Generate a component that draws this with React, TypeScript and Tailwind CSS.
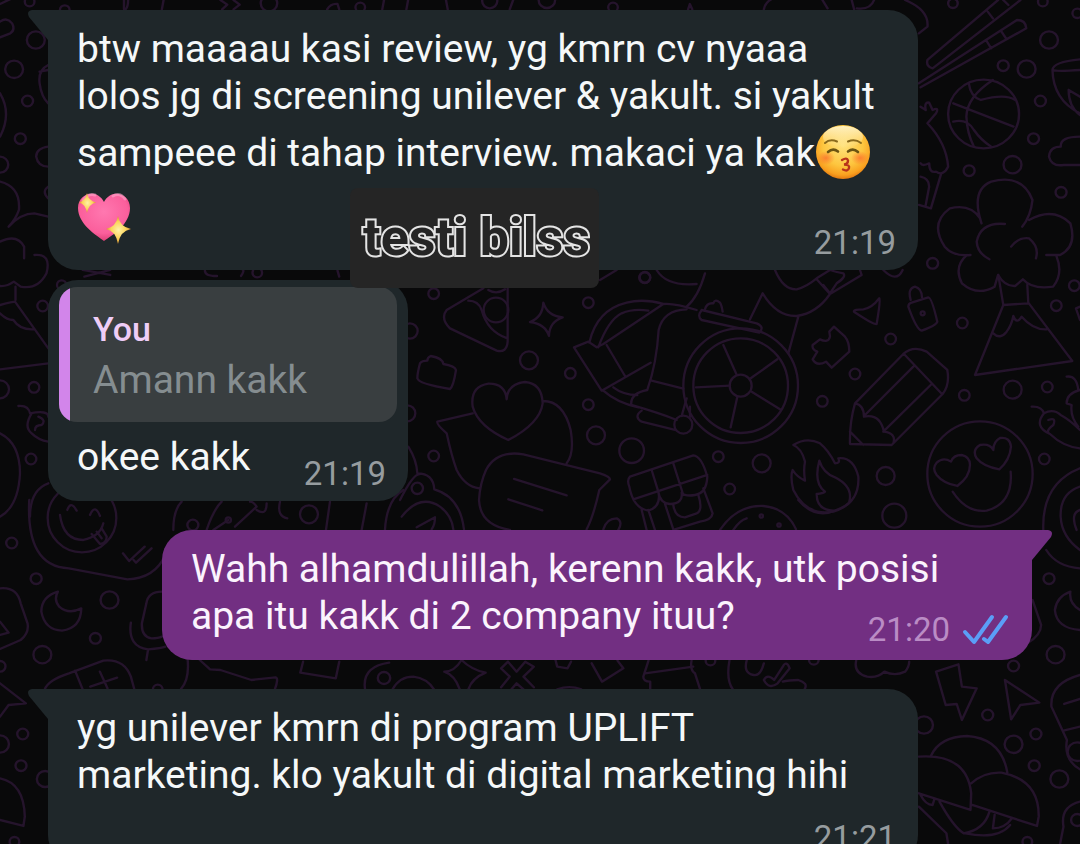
import type { ReactNode } from 'react';
import clsx from 'clsx';

type BubbleProps = {
  children: ReactNode;
  time: string;
  sent?: boolean;
  tail?: boolean;
  className?: string;
};

// Each patch of wallpaper is drawn at about three times its size and scaled down
type Patch = {
  transform: string;
  path: string;
  dots: number[][];
};

const patches: Patch[] = [
  {
    transform: 'scale(.3444 .3333)',
    path: 'M0 65Q20 50 35 70Q45 90 30 100L0 112M0 12L45-10M0 280Q35 340 0 410M0 545Q60 560 55 630Q45 660 25 680Q60 640 100 640L140 650M0 725Q50 700 70 740V775M100 765Q150 760 135 820Q110 870 60 860L40 845Q20 860 0 858M45 860V900M140 195Q110 210 115 250Q120 290 140 310M140 210L115 215M140 440Q105 445 105 470Q110 500 140 500M140 560Q120 575 140 595M360 0V28M372 0Q372 20 365 28M475 0L470 28M640 0L660 14L645 28M678 0L696 14L678 28M950 28Q960 10 980 12L985 28M1115 0L1110 28M1180 28L1185 0M1295 0L1300 28M1480 28L1490 0M240 810L320 825M245 830L320 810M595 812Q595 828 630 828M700 828Q710 812 705 810M980 812L985 830',
    dots: [[86, 5, 14], [104, 120, 26], [41, 208, 26], [80, 303, 16], [59, 416, 16], [0, 494, 24], [781, 10, 24], [1046, 22, 14], [1422, 3, 22], [188, 30, 14], [747, 818, 14]],
  },
  {
    transform: 'translate(540 0) scale(.3444 .3333)',
    path: 'M1330 0L1125 180Q1120 200 1140 205L1395 0M1300 35L1315 55M1345 0L1360 15M1100 250L1385 60Q1410 60 1412 85L1105 262M1340 95L1355 118M1295 120L1310 145M1200 310L1375 380M1245 250Q1250 290 1280 300Q1350 280 1380 300M1315 240Q1240 290 1238 350Q1240 400 1260 440M1200 365Q1240 355 1260 390Q1280 420 1310 440M1568 178Q1490 185 1488 210Q1500 215 1568 210M1488 210Q1490 300 1568 340M1535 270Q1535 320 1568 345M1535 270L1568 290M1568 410Q1510 410 1512 440Q1480 440 1478 470Q1485 500 1520 495L1568 495M1282 670Q1250 570 1310 545Q1400 520 1430 600Q1425 650 1400 680M1278 655Q1250 610 1190 625Q1130 670 1175 740Q1200 770 1250 765M1420 660Q1490 620 1540 670Q1560 740 1510 765L1470 765M1240 765Q1200 800 1225 850Q1270 890 1320 860L1330 825Q1350 860 1380 858L1402 838Q1430 870 1490 860Q1520 820 1500 770M1350 672Q1280 665 1268 725Q1270 760 1305 778M1368 740Q1390 710 1420 715Q1450 740 1440 775M1105 320L1120 330Q1115 305 1130 308L1140 330Q1160 320 1150 340L1125 370Q1180 430 1185 500Q1170 530 1150 515Q1130 520 1130 490Q1110 500 1105 490M1165 520L1135 625L1100 615M1105 530Q1130 535 1130 560L1120 615M650 28Q655 0 690-10M820 0L835 25M905 0L912 28M970 0Q960 30 920 25M1060 0Q1130 30 1125 80L1100 100M430 28L435 12L442 28',
    dots: [[1199, 10, 14], [1460, 5, 14], [1478, 120, 26], [1345, 197, 16], [1413, 207, 26], [1288, 342, 103], [1453, 303, 16], [1433, 416, 16], [1372, 494, 26], [1246, 512, 16], [1513, 577, 16], [1140, 790, 16], [304, 833, 16], [1560, 40, 14], [212, 22, 14], [20, 0, 24]],
  },
  {
    transform: 'translate(0 270) scale(.3333)',
    path: 'M0 105Q40 95 45 95L145 235M0 298L145 280M0 130Q20 150 40 150Q60 180 100 178M55 408Q85 405 90 430Q145 420 145 440M95 430Q70 470 95 490Q115 510 145 515M115 440Q140 450 125 465Q105 465 105 480M0 490Q60 520 60 610Q55 710 0 740M180 735Q190 810 250 810Q300 800 310 760M202 720Q212 690 230 722M270 735Q285 700 300 738M275 792L300 822Q320 820 320 800L305 775M290 785L305 805M145 640Q90 660 90 740M520 780Q520 720 545 695M620 780Q640 720 665 695M640 780L685 750M705 770L770 710Q760 695 750 695M770 720Q800 740 800 700M840 695Q830 740 862 745M990 695L978 780M1100 700L1085 780M1155 780Q1160 690 1210 660',
    dots: [[128, 108, 16], [185, 45, 14], [102, 352, 16], [0, 358, 27], [93, 567, 16], [927, 733, 27], [246, 744, 103], [685, 750, 8]],
  },
  {
    transform: 'translate(400 270) scale(.3333)',
    path: 'M323 55V215Q320 250 290 242L150 175Q120 145 140 120L250 55M205 92Q235 92 245 120Q262 185 322 205M265 60Q290 75 315 58M430 98Q442 138 488 142Q448 155 447 198Q436 162 390 156Q428 142 430 98ZM60 280Q52 310 52 325Q56 342 150 357Q160 350 168 300Q165 288 130 282Q128 264 92 258Q82 262 82 272Q66 272 60 280ZM320 388Q316 340 265 341Q210 350 218 410Q235 470 325 510Q420 460 428 400Q426 340 375 336Q322 342 320 388ZM218 430L112 455Q108 462 140 490Q155 560 170 600Q195 650 238 655M428 393Q490 392 512 480Q524 550 500 580M560 778Q580 740 598 660L630 628Q630 620 600 610L370 553Q290 540 258 600Q240 640 237 690Q240 765 330 780M342 627L500 676M325 688L427 721M568 218Q590 120 680 98Q730 85 790 102M595 232Q625 150 665 130Q700 115 745 122M790 102L610 222L590 232L565 215L522 232L605 362L752 278M620 225L675 318M610 362Q650 398 715 412M640 352Q670 375 712 375M860 118Q790 120 776 180Q770 280 742 360M890 120Q820 98 790 102M755 332L850 356M742 360Q690 370 694 405Q780 430 830 450M845 438L860 385M870 440V410M725 422Q700 440 725 455L825 480M770 0Q800 50 890 42M915 10Q895 80 860 110M600 30L650 0M915 118Q920 98 940 100Q945 85 960 98Q965 105 968 125M690 620L880 556Q905 558 922 620Q920 670 885 675Q855 680 845 668Q850 700 810 702Q780 700 775 665Q785 710 745 722Q700 715 688 650Q680 630 690 620M700 688L922 615M755 600L775 665M820 580L850 675M910 655L938 730Q935 750 900 755L825 778M795 702L820 778M725 720L740 780M745 720L765 780M820 705Q825 742 855 742L890 730Q910 722 895 675M610 778Q620 745 650 745Q670 755 655 780M25 530Q50 570 52 610Q100 610 103 658Q180 680 192 778M0 690Q40 610 60 612M5 740Q60 670 120 710Q155 735 160 778M50 772L105 742Q105 765 95 778',
    dots: [[101, 71, 16], [30, 183, 23], [288, 120, 37], [565, 98, 16], [387, 271, 27], [511, 310, 16], [565, 404, 16], [588, 496, 27], [695, 542, 37], [955, 560, 16], [101, 558, 16], [22, 430, 24], [735, 22, 16], [850, 464, 27], [52, 655, 17]],
  },
  {
    transform: 'translate(720 270) scale(.3333)',
    path: 'M50 314L10 225M92 325L172 268M95 365L180 418M52 380L32 472M30 347L-72 352M90 148L128 70Q170 140 230 138Q290 130 330 72L290 28M235 140L205 250M165 0Q190 60 230 58Q260 50 290 25L330 0M330 72L425 15L420 0M310 45L330 70L350 40Q380 20 370 10Q345 5 330 0M-55 120Q-70 140-55 150M-55 120L110 160Q135 170 118 188L-55 150M490 0Q530 40 548 0M402 125Q400 118 430 118Q455 115 478 85Q482 90 470 162Q462 165 402 125ZM572 90Q562 55 585 50Q605 55 606 82M575 98L625 82Q635 82 652 155Q650 165 605 182Q590 180 565 110Q565 100 575 98ZM342 170L375 200Q388 215 388 245L335 293L318 275Q290 290 278 268L292 245Q275 238 278 225L300 208Q325 220 330 200L328 185ZM550 252L405 400Q388 460 390 522L515 525L668 372Q690 345 682 300L620 245Q580 225 550 252ZM552 252L666 372M580 290L435 435M632 345L490 485M405 400Q432 405 432 440Q480 430 492 485Q530 490 520 520M390 485L430 525M220 525Q260 500 300 520Q325 540 345 580Q362 580 355 565Q400 560 415 620Q420 700 340 725Q260 740 220 660Q210 620 218 600Q230 620 255 632Q250 600 255 575Q245 535 220 525ZM340 722Q290 720 290 672Q310 670 315 665Q280 640 298 572Q310 610 345 622Q400 650 388 695M698 665Q740 730 800 722Q880 700 872 605M693 575Q670 560 650 578Q635 595 650 615Q670 640 712 648Q750 620 750 585Q750 560 725 555Q700 555 693 575ZM820 540Q810 520 780 525Q755 540 770 565Q790 590 838 598Q870 570 873 530Q870 500 840 504Q820 515 820 540ZM850 105L765 315L1057 273L925 98M835 15L850 105L925 100L922 45M820 190Q840 210 860 185Q875 165 880 138Q890 165 905 140Q940 180 980 178M935 410Q965 408 972 430Q940 470 990 492Q1030 530 1080 535M972 430Q1000 415 1022 435Q1050 450 1080 480M985 450Q1010 440 1000 465Q980 480 985 488M1040 320Q1070 315 1075 360M1080 360Q1040 370 1040 400L1055 405Q1050 440 1075 470M970 780Q965 640 1080 595M1080 650Q1020 670 1022 740Q1025 800 1080 840M1080 720Q1050 730 1070 780M1080 110L1068 115L1080 150M0 780Q50 705 130 708Q200 715 228 778M40 780Q60 750 80 745',
    dots: [[62, 347, 172], [62, 347, 142], [62, 347, 33], [512, 207, 16], [405, 312, 16], [307, 394, 16], [727, 159, 16], [1063, 47, 16], [1009, 107, 16], [878, 359, 27], [982, 351, 16], [733, 376, 16], [125, 580, 27], [497, 618, 27], [523, 737, 36], [29, 657, 16], [973, 567, 16], [780, 612, 158], [608, 130, 6], [124, 738, 5], [177, 765, 5]],
  },
  {
    transform: 'translate(0 500) scale(.3444 .3333)',
    path: 'M85 0Q75 200 200 205L370 238Q450 235 480 165M357 160L375 183L420 140M388 180L395 188L440 145M168 275Q120 290 120 335Q130 390 180 392Q235 385 236 325Q200 345 172 320Q155 300 168 275ZM0 265Q50 260 60 310L80 370Q85 400 60 420L0 447M0 365L25 398L0 405M470 275Q430 275 425 310L412 370Q410 410 440 415Q460 415 470 410M380 368Q370 440 430 448Q470 445 480 440M430 448L425 480M130 568Q140 540 200 520L300 482Q360 475 380 530L390 568M218 512L240 568M290 515L312 565M262 560L340 533M0 550L75 610L25 615L0 650M545 480Q550 540 525 568M580 480L610 508L640 510L730 540L800 532Q810 535 798 568M880 485L872 518L975 535L985 485M1060 568Q1050 500 1130 488M1140 568Q1160 530 1200 530Q1240 535 1260 568M1340 480Q1320 515 1290 515Q1320 525 1335 568M1340 480Q1370 510 1410 518Q1370 535 1360 568M1475 485L1500 515L1525 485L1550 500L1520 530L1550 562M1475 485L1455 505L1480 530L1455 562M1485 568L1500 550L1520 568M0 835Q70 850 72 950L68 978L0 960',
    dots: [[34, 129, 16], [105, 236, 16], [318, 300, 26], [277, 415, 16], [123, 464, 26], [0, 499, 16], [66, 702, 16], [0, 732, 26], [61, 797, 16], [42, 1025, 14], [131, 837, 24], [1115, 534, 18], [560, 75, 16], [458, 568, 14]],
  },
  {
    transform: 'translate(540 500) scale(.3444 .3333)',
    path: 'M45 480L50 500L80 505L90 485M150 490L180 545L242 505L225 482M50 568Q85 555 120 568M315 482L300 530Q300 545 320 545L320 568M305 520L445 500M440 482Q435 510 450 520L465 568M550 482Q540 540 560 568M600 482Q590 520 620 525Q640 530 650 490M650 540Q665 570 690 550L725 505Q715 480 705 500L680 540Q660 520 650 540M705 545Q720 540 750 540Q780 550 768 568M918 482Q910 520 950 530Q980 535 1000 515Q1030 530 1060 515Q1072 500 1072 485M1150 515L1215 493L1225 560L1268 565L1225 660L1210 612L1178 615ZM1350 540L1450 608L1395 615L1368 658ZM1568 525Q1480 550 1485 620L1530 720Q1520 780 1568 808M1522 612L1568 597M1520 692L1568 680M1540 275Q1500 290 1495 330Q1500 385 1568 390M1540 275Q1535 310 1568 330M1430 300L1455 375Q1455 405 1415 430M1470 150Q1500 200 1568 205M1135 768Q1160 710 1240 708Q1340 715 1357 818M1100 770Q1240 760 1252 880L1250 930L1100 880M1252 850Q1290 815 1340 818Q1450 840 1448 950L1443 978L1255 915M1105 885Q1120 915 1140 915L1145 898M1160 905Q1200 980 1230 1000Q1290 990 1305 935M1320 945L1315 985Q1350 985 1370 955M1235 1000Q1330 1020 1365 975M1100 920L1180 1000L1185 1032M1568 905Q1510 920 1520 980L1510 1032M750 0Q800 60 860 30Q890 20 905 0',
    dots: [[1478, 236, 16], [1375, 498, 16], [1497, 464, 26], [1115, 675, 26], [1300, 645, 16], [1440, 702, 16], [1375, 733, 26], [1435, 797, 16], [1508, 837, 26], [1560, 755, 28], [1560, 960, 18], [495, 482, 14], [795, 480, 14], [1415, 1025, 14]],
  },
];

const Wallpaper = () => (
  <svg
    className="absolute inset-0 w-full h-full"
    viewBox="0 0 1080 844"
    preserveAspectRatio="xMidYMid slice"
    fill="none"
    stroke="#25142c"
    strokeWidth={7}
    strokeLinecap="round"
    strokeLinejoin="round"
    aria-hidden="true"
  >
    {patches.map((patch) => (
      <g key={patch.transform} transform={patch.transform}>
        <path d={patch.path} />
        {patch.dots.map(([cx, cy, r]) => (
          <circle key={`${cx}-${cy}-${r}`} cx={cx} cy={cy} r={r} />
        ))}
      </g>
    ))}
  </svg>
);

const KissEmoji = () => (
  <svg className="inline-block w-[55px] h-[65px] align-[-19px]" viewBox="0 0 55 65" role="img" aria-label="Kissing face">
    <defs>
      <radialGradient id="kissFace" cx="50%" cy="38%" r="62%">
        <stop offset="0%" stopColor="#ffe27c" />
        <stop offset="60%" stopColor="#fdc63f" />
        <stop offset="88%" stopColor="#f9a01f" />
        <stop offset="100%" stopColor="#e27a12" />
      </radialGradient>
      <linearGradient id="kissShine" x1="0" y1="0" x2="0" y2="1">
        <stop offset="0%" stopColor="#fff6cf" stopOpacity="0.9" />
        <stop offset="100%" stopColor="#fff6cf" stopOpacity="0" />
      </linearGradient>
      <radialGradient id="kissBlush">
        <stop offset="0%" stopColor="#fb6a2c" stopOpacity="0.75" />
        <stop offset="100%" stopColor="#fb6a2c" stopOpacity="0" />
      </radialGradient>
    </defs>
    <circle cx="28" cy="32" r="27" fill="url(#kissFace)" />
    <ellipse cx="28" cy="17" rx="20" ry="11" fill="url(#kissShine)" />
    <ellipse cx="11" cy="38" rx="9" ry="7" fill="url(#kissBlush)" />
    <ellipse cx="45" cy="38" rx="9" ry="7" fill="url(#kissBlush)" />
    <g fill="none" strokeLinecap="round">
      <path d="M10 23Q15 18.500 22 21.500M33 21.500Q40 18.500 46 23" stroke="#8a6a1c" strokeWidth="2" />
      <path d="M13 32Q18 27.500 23 31.500M33 31.500Q38 27.500 43 32" stroke="#6b5412" strokeWidth="2.600" />
      <path d="M27 40Q32 37 33 40.500Q33 44 29 44.500Q35 44.500 34 48Q33 52 28 49.500" stroke="#b8341a" strokeWidth="2.400" />
    </g>
  </svg>
);

const HeartEmoji = () => (
  <svg className="inline-block w-[55px] h-[65px] align-[-19px]" viewBox="0 0 55 65" role="img" aria-label="Sparkling heart">
    <defs>
      <radialGradient id="heartFill" cx="50%" cy="38%" r="65%">
        <stop offset="0%" stopColor="#ff78b0" />
        <stop offset="70%" stopColor="#fb5f9c" />
        <stop offset="100%" stopColor="#d93a72" />
      </radialGradient>
      <radialGradient id="sparkFill">
        <stop offset="0%" stopColor="#fff3a6" />
        <stop offset="60%" stopColor="#fbd35a" />
        <stop offset="100%" stopColor="#d9912b" />
      </radialGradient>
    </defs>
    <path d="M27 56C19 50 1 39 1 23C1 8 20 3 27 17C34 3 53 8 53 23C53 39 36 50 27 56Z" fill="url(#heartFill)" />
    <path d="M6 15Q11 8 18 10M36 11Q43 7 48 14" fill="none" stroke="#ffb3d3" strokeOpacity="0.5" strokeWidth="3" strokeLinecap="round" />
    <path d="M10 8Q11.500 16 19 17.500Q11.500 19 10 28Q8.500 19 2 17.500Q8.500 16 10 8Z" fill="url(#sparkFill)" />
    <path d="M41 31Q43 42 54 44Q43 46 41 59Q39 46 29 44Q39 42 41 31Z" fill="url(#sparkFill)" />
  </svg>
);

const ReadTicks = () => (
  <svg className="w-[46px] h-8" viewBox="0 0 46 32" fill="none" stroke="#5b9ef7" strokeWidth="4" strokeLinecap="round" strokeLinejoin="round" role="img" aria-label="Read">
    <path d="M3 18L12 28L30 3" />
    <path d="M22 25L26 28L44 3" />
  </svg>
);

const Tail = ({ sent }: { sent?: boolean }) => (
  <svg
    className={clsx('absolute top-0 w-5 h-[30px]', sent ? '-right-5 fill-[#722f82] -scale-x-100' : '-left-5 fill-[#1f272a]')}
    viewBox="0 0 20 30"
    aria-hidden="true"
  >
    <path d="M20 0H4Q-2 1 1 7L20 30Z" />
  </svg>
);

const Bubble = ({ children, time, sent, tail, className }: BubbleProps) => (
  <article
    className={clsx(
      'relative grid rounded-[30px]',
      sent ? 'self-end bg-[#722f82] text-[#fbf3fd]' : 'self-start bg-[#1f272a] text-[#f5f8f9]',
      tail && (sent ? 'rounded-tr-none' : 'rounded-tl-none'),
      className
    )}
  >
    {tail && <Tail sent={sent} />}
    <div className="col-start-1 row-start-1">{children}</div>
    <div
      className={clsx(
        'col-start-1 row-start-1 self-end justify-self-end flex items-center gap-3 text-[33px] leading-10',
        sent ? 'mr-6 mb-2.5 text-[#ba8cc5]' : 'mr-[22px] mb-[7px] text-[#969c9f]'
      )}
    >
      <time>{time}</time>
      {sent && <ReadTicks />}
    </div>
  </article>
);

const App = () => {
  return (
    <main className="relative h-screen overflow-hidden bg-[#09090a] font-['Roboto','Noto_Sans',sans-serif]">
      <Wallpaper />

      <div className="relative flex flex-col px-12 pt-2.5 text-[39px] leading-[47px]">
        <Bubble time="21:19" tail className="w-full max-w-[870px]">
          <p className="pl-[29px] pr-8 pt-4 pb-5">
            btw maaaau kasi review, yg kmrn cv nyaaa lolos jg di screening unilever &amp; yakult. si yakult
            sampeee di tahap interview. makaci ya kak<KissEmoji /><HeartEmoji />
          </p>
          {/* Label laid over the chat */}
          <div className="absolute z-10 left-[302px] top-[178px] w-[249px] h-[100px] pl-1 rounded-lg bg-[#252525] flex items-center justify-center">
            <span className="text-[52px] leading-[60px] font-bold text-[#252525] [-webkit-text-stroke:4px_#e4e4e4] [paint-order:stroke_fill]">testi bilss</span>
          </div>
        </Bubble>

        <Bubble time="21:19" className="mt-2.5 w-[360px]">
          <blockquote className="mx-[11px] mt-[7px] flex rounded-[18px] overflow-hidden bg-[#393e40]">
            <div className="w-[11px] bg-[#d285ea]" />
            <div className="pl-[23px] pt-[22px] pb-[18px]">
              <p className="text-[34px] leading-10 font-medium text-[#efcdf7]">You</p>
              <p className="mt-2 text-[#858d90]">Amann kakk</p>
            </div>
          </blockquote>
          <p className="pl-[29px] pr-8 pt-3 pb-5">okee kakk</p>
        </Bubble>

        <Bubble time="21:20" sent tail className="mt-[29px] w-full max-w-[870px]">
          <p className="pl-[29px] pr-8 pt-4 pb-5">
            Wahh alhamdulillah, kerenn kakk, utk posisi apa itu kakk di 2 company ituu?
          </p>
        </Bubble>

        <Bubble time="21:21" tail className="mt-[29px] w-full max-w-[870px]">
          <p className="pl-[29px] pr-8 pt-4 pb-[66px]">
            yg unilever kmrn di program UPLIFT marketing. klo yakult di digital marketing hihi
          </p>
        </Bubble>
      </div>
    </main>
  );
};

export default App;
